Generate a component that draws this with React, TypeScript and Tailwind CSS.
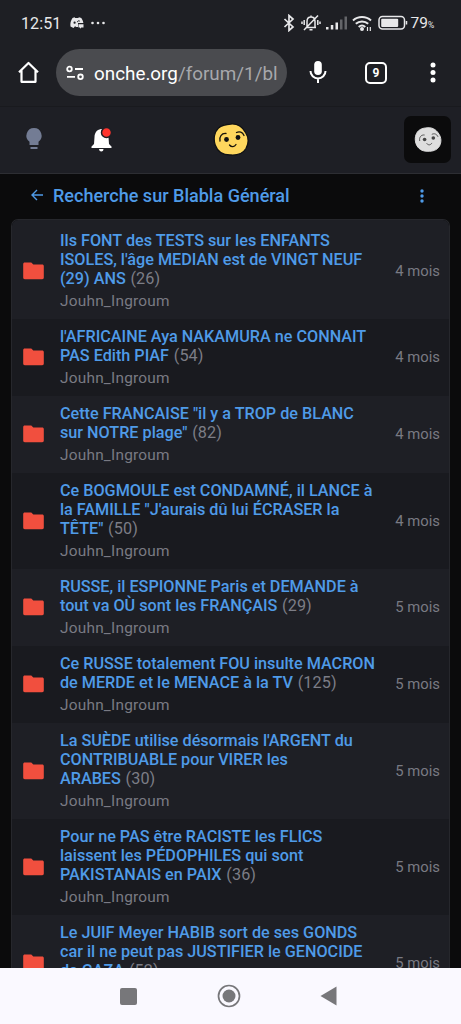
import React from "react";

type Topic = { lines: string[]; count: number; age: string; };

const topics: Topic[] = [
  { lines: ["Ils FONT des TESTS sur les ENFANTS", "ISOLES, l'âge MEDIAN est de VINGT NEUF", "(29) ANS"], count: 26, age: "4 mois" },
  { lines: ["l'AFRICAINE Aya NAKAMURA ne CONNAIT", "PAS Edith PIAF"], count: 54, age: "4 mois" },
  { lines: ["Cette FRANCAISE \"il y a TROP de BLANC", "sur NOTRE plage\""], count: 82, age: "4 mois" },
  { lines: ["Ce BOGMOULE est CONDAMNÉ, il LANCE à", "la FAMILLE \"J'aurais dû lui ÉCRASER la", "TÊTE\""], count: 50, age: "4 mois" },
  { lines: ["RUSSE, il ESPIONNE Paris et DEMANDE à", "tout va OÙ sont les FRANÇAIS"], count: 29, age: "5 mois" },
  { lines: ["Ce RUSSE totalement FOU insulte MACRON", "de MERDE et le MENACE à la TV"], count: 125, age: "5 mois" },
  { lines: ["La SUÈDE utilise désormais l'ARGENT du", "CONTRIBUABLE pour VIRER les", "ARABES"], count: 30, age: "5 mois" },
  { lines: ["Pour ne PAS être RACISTE les FLICS", "laissent les PÉDOPHILES qui sont", "PAKISTANAIS en PAIX"], count: 36, age: "5 mois" },
  { lines: ["Le JUIF Meyer HABIB sort de ses GONDS", "car il ne peut pas JUSTIFIER le GENOCIDE", "de GAZA"], count: 52, age: "5 mois" },
];

function StatusBar() {
  return (
    <div className="flex h-[46px] shrink-0 items-center pl-[21px] pr-[26px] text-[#e8e8ea]">
      <span className="w-[39px] whitespace-nowrap pt-px text-[16px] leading-none tracking-[0.1px]">12:51</span>
      <svg className="ml-[10px]" width="14" height="12" viewBox="0 0 14 12" fill="currentColor">
        <path d="M2.5 1 4.5.2l.7.8h3l.8-.8 2.3.9C12.6 3 13.3 4.8 13.3 6H8v4H5.8L5.2 9l-1.7 2L.5 9.5C0 6.5.8 3.5 2.5 1Z" />
        <circle cx="4.600" cy="5.700" r="1.100" fill="#1e1f24" />
        <path d="M7.300 5.200a1.500 1.500 0 0 1 2.500-1" stroke="#1e1f24" fill="none" />
        <path d="M8.500 7.200h5v3.300h-2.200L10 11.700v-1.200H8.500Z" />
      </svg>
      <svg className="ml-[7px]" width="14" height="4" fill="currentColor"><circle cx="1.500" cy="2" r="1.300" /><circle cx="7" cy="2" r="1.300" /><circle cx="12.500" cy="2" r="1.300" /></svg>
      <span className="flex-1" />
      <svg width="12" height="18" viewBox="0 0 12 18" fill="none" stroke="currentColor" strokeWidth="1.700"><path d="M1.500 5 10 13 6 16.500V1.500L10 5 1.500 13" /></svg>
      <svg className="ml-[6px]" width="20" height="18" viewBox="0 0 20 18" fill="none" stroke="currentColor" strokeWidth="1.500">
        <path d="M5 13.500h10M6 13V7.500C6 4.700 7.500 3 10 3s4 1.700 4 4.500V13M8.500 15.800h3M10 1.500V3M3 16 17 1.500M3.200 6v5M16.800 6v5M1 7.500v2.500M19 7.500v2.500" />
      </svg>
      <svg className="ml-[5px]" width="22" height="14" viewBox="0 0 22 14" fill="currentColor">
        <path d="M0 11h2.500v2.500H0zM4.800 9h2.500v4.500H4.800zM9.500 6.500H12v7H9.500z" /><path d="M14 3.500h2.500v10H14zM18.500.5H21v13h-2.500z" opacity=".35" />
      </svg>
      <svg className="ml-[4px]" width="21" height="17" viewBox="0 0 21 17" fill="none" stroke="currentColor" strokeWidth="2">
        <path d="M1 5.500a13.500 13.500 0 0 1 18 0M3.800 8.800a9.300 9.300 0 0 1 12.400 0M6.700 12a5 5 0 0 1 6.600 0" /><circle cx="10" cy="14" r="1" fill="currentColor" /><path d="M15.500 12v4M18.300 12v4" strokeWidth="1.200" />
      </svg>
      <svg className="ml-[5px]" width="30" height="16" viewBox="0 0 30 16" fill="none">
        <rect x="1" y="1.500" width="25.500" height="12.500" rx="3.500" stroke="currentColor" strokeWidth="1.500" /><rect x="3.200" y="3.700" width="17" height="8.200" rx="1" fill="currentColor" /><path d="M28.500 6v3.500" stroke="currentColor" strokeWidth="1.500" />
      </svg>
      <span className="ml-[3px] pt-px text-[15.500px] leading-none">79</span><span className="mt-[5px] w-[7px] text-[8.500px] leading-none">%</span>
    </div>
  );
}

function BrowserBar() {
  return (
    <div className="flex h-[60px] shrink-0 items-start pl-[17px] pr-[24px] pt-[3px] text-white">
      <svg className="mt-[12px]" width="23" height="23" viewBox="0 0 23 23" fill="none" stroke="currentColor" strokeWidth="2.200" strokeLinejoin="round"><path d="M2 11.200 11.500 2l9.500 9.200M4.500 9.500v11.300h14V9.500" /></svg>
      <div className="ml-4 flex h-[47px] w-[231px] items-center rounded-full bg-[#4a4b4f] pl-[10px]">
        <svg width="19" height="16" viewBox="0 0 19 16" fill="none" stroke="currentColor" strokeWidth="1.800"><circle cx="3.500" cy="4" r="2.300" /><path d="M9 4h8M1 11.800h8" /><circle cx="14.500" cy="11.800" r="2.300" /></svg>
        <span className="ml-[9px] whitespace-nowrap pt-[3px] text-[18.850px] leading-none text-[#a7a8ac]"><span className="text-white">onche.org</span>/forum/1/bl</span>
      </div>
      <svg className="ml-[22px] mt-[11px]" width="18" height="24" viewBox="0 0 18 24"><rect x="5.200" y="1" width="7.600" height="14" rx="3.800" fill="currentColor" /><path d="M1.500 11a7.500 7.500 0 0 0 15 0M9 18.500V23" fill="none" stroke="currentColor" strokeWidth="2" /></svg>
      <div className="ml-[38px] mt-[13px] flex h-[22px] w-[22px] items-center justify-center rounded-[5px] border-2 border-white text-[12px] font-bold leading-none">9</div>
      <svg className="ml-auto mt-[13px] mr-[1px]" width="6" height="22" fill="currentColor"><circle cx="3" cy="3" r="2.500" /><circle cx="3" cy="10.500" r="2.500" /><circle cx="3" cy="18" r="2.500" /></svg>
    </div>
  );
}

function Face({ muted = false }: { muted?: boolean }) {
  return (
    <svg className={muted ? "h-[25px] w-[28px]" : "h-[33px] w-[36px]"} viewBox="0 0 36 33" fill="none">
      <path d="M18 1C25 .5 30 5 32.500 9.500 35.500 14 36 20 33 25.500 30 30.500 24 32.300 18 32 10 32.300 4.500 28.500 2.200 22 .2 16 1.200 9 5.500 5 9 1.800 13.500 1.200 18 1Z" fill={muted ? "#dedede" : "#ffd75d"} stroke={muted ? "#dedede" : "#111214"} strokeWidth="1.300" />
      <g stroke={muted ? "#555" : "#17130b"} strokeWidth="1.300" strokeLinecap="round"><path d="M7 18c-1-4 1.500-8 6-7.500M23.500 9.500c3-1.500 6-.3 7.500 3M16.500 22c2 2.500 5 2 6.500-.5" /></g>
      <circle cx="13.500" cy="16.500" r="2.400" fill={muted ? "#444" : "#111"} /><circle cx="25" cy="14.500" r="2.400" fill={muted ? "#444" : "#111"} />
    </svg>
  );
}

function SiteHeader() {
  return (
    <header className="grid h-[68px] shrink-0 grid-cols-3 items-center border-y border-b-[#2d2e33] border-t-[#191a1e] bg-[#1e1f25] pb-[2px] pl-[25px] pr-[10px]">
      <div className="flex items-center">
        <svg width="18" height="24" viewBox="0 0 18 24" fill="#737c94"><path d="M9 1a7.600 7.600 0 0 0-4.500 13.700V18h9v-3.300A7.600 7.600 0 0 0 9 1ZM5.500 20h7v2h-7z" /></svg>
        <svg className="ml-[48px]" width="22" height="25" viewBox="0 0 22 25"><path d="M10 2c-4.500.8-6.300 4-6.500 8L3 17l-2.500 2.500V21h20v-1.500L18 17l-.5-7c-.2-4-3-7.500-7.500-8ZM8 22h4.500c-.2 1.800-1 2.500-2.200 2.500S8.200 23.700 8 22Z" fill="white" /><circle cx="15.500" cy="5.500" r="5" fill="#ff342e" stroke="#1e1f25" strokeWidth="1.500" /></svg>
      </div>
      <div className="flex justify-center pr-[15px]"><Face /></div>
      <div className="ml-auto flex h-[47px] w-[47px] items-center justify-center rounded-[7px] bg-[#0b0b0c]"><Face muted /></div>
    </header>
  );
}

function TopicRow({ topic, index }: { topic: Topic; index: number }) {
  return (
    <li className={`flex shrink-0 items-center pl-[11.400px] pr-[9px] ${index === 0 ? "pt-[2.900px]" : ""} ${index % 2 ? "bg-[#191a1f]" : "bg-[#1e1f25]"}`}>
      <svg width="21" height="18" viewBox="0 0 21 18" fill="#f14f3e"><path d="M1.800.5h6.500l2 2h8.900c1 0 1.600.7 1.600 1.600v11.400c0 1-.6 1.700-1.600 1.700H1.800C.8 17.200.2 16.500.2 15.500V2.100C.2 1.100.8.5 1.800.5Z" /></svg>
      <div className="ml-[15.600px] pb-[7.900px] pt-[9.300px]">
        <h2 className="whitespace-nowrap text-[16.200px] font-medium leading-[18.800px] text-[#4f9be8]">
          {topic.lines.map((line, i) => <React.Fragment key={i}>{i > 0 && <br />}{line}</React.Fragment>)}
          <span className="font-normal tracking-[0.100px] text-[#7c7d86]">{"\u00a0"}<span className="ml-[0.600px]">({topic.count})</span></span>
        </h2>
        <p className="mt-[2.300px] text-[15.400px] leading-[20px] tracking-[0.230px] text-[#797a83]">Jouhn_Ingroum</p>
      </div>
      <span className="ml-auto whitespace-nowrap text-[14.800px] text-[#797a83]">{topic.age}</span>
    </li>
  );
}

export default function App() {
  return (
    <div className="flex h-[1024px] w-[461px] flex-col overflow-hidden bg-[#1e1f24] font-['Roboto',sans-serif]">
      <StatusBar />
      <BrowserBar />
      <SiteHeader />
      <main className="flex min-h-0 flex-1 flex-col overflow-hidden bg-[#0b0b0c] px-[11px]">
        <div className="flex h-[45px] shrink-0 items-center pb-px pl-[20px] pr-[26px] text-[#4f9be8]">
          <svg className="mb-[3px]" width="12" height="12" viewBox="0 0 12 12" fill="none" stroke="currentColor" strokeWidth="1.400"><path d="M12 6H1M6 1 1 6l5 5" /></svg>
          <h1 className="ml-[10px] text-[18.050px] font-medium leading-none">Recherche sur Blabla Général</h1>
          <svg className="ml-auto" width="4" height="14" fill="currentColor"><circle cx="2" cy="2" r="1.700" /><circle cx="2" cy="7" r="1.700" /><circle cx="2" cy="12" r="1.700" /></svg>
        </div>
        <ul className="flex min-h-0 flex-1 flex-col overflow-hidden rounded-t-[7px] border-x border-t border-[#26272c]">
          {topics.map((topic, i) => <TopicRow key={i} topic={topic} index={i} />)}
        </ul>
      </main>
      <nav className="flex h-[56px] shrink-0 items-center bg-[#faf9ff] pl-[120px]">
        <span className="h-[17px] w-[17px] rounded-[2px] bg-[#77777a]" />
        <svg className="ml-[80px]" width="24" height="24"><circle cx="12" cy="12" r="10.500" fill="none" stroke="#77777a" strokeWidth="1.700" /><circle cx="12" cy="12" r="6.500" fill="#77777a" /></svg>
        <svg className="ml-[79px]" width="17" height="20"><path d="M.5 10 16.500.5v19Z" fill="#77777a" /></svg>
      </nav>
    </div>
  );
}
